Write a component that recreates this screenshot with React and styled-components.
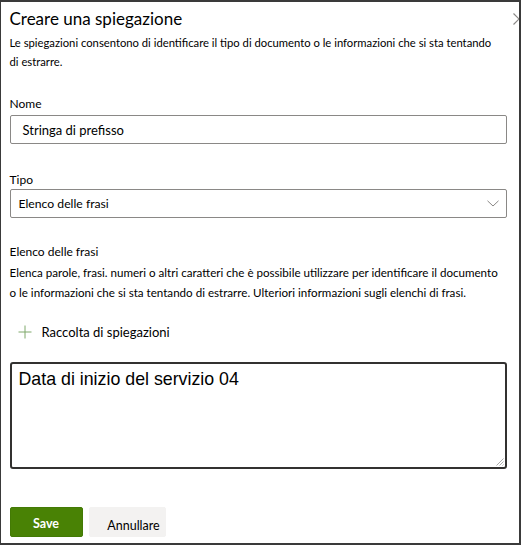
import React from "react";
import styled, { createGlobalStyle } from "styled-components";

const Global = createGlobalStyle`
  html, body { margin: 0; padding: 0; background: #fff; }
  body { font-family: Lato, "Liberation Sans", Arial, sans-serif; color: #000; }
  * { box-sizing: border-box; }
`;

const Panel = styled.div`
  position: relative;
  width: 521px;
  height: 545px;
  border: 2px solid #3a3a3a;
  border-left-width: 1.5px;
  overflow: hidden;
  padding: 0 12px 0 8.5px;
  display: flex;
  flex-direction: column;
`;

const Header = styled.div`
  position: relative;
  padding-top: 5px;
`;

const Title = styled.h1`
  margin: 0;
  font-size: 17px;
  font-weight: 400;
  line-height: 24px;
  color: #000;
`;

const Close = styled.button`
  position: absolute;
  top: 11px;
  right: -18px;
  width: 12px;
  height: 12px;
  padding: 0;
  border: 0;
  background: none;
  display: flex;
  svg { display: block; }
`;

const Text = styled.p`
  margin: ${p => p.$mt}px 0 0;
  max-width: ${p => p.$maxw}px;
  font-size: ${p => p.$size}px;
  line-height: ${p => p.$lh}px;
  color: #000;
`;

const Label = styled.label`
  display: block;
  margin-top: ${p => p.$mt}px;
  font-size: 12px;
  line-height: 18px;
  color: #000;
`;

const Field = styled.div`
  margin-top: ${p => p.$mt}px;
  height: 29px;
  border: 1px solid #8a8886;
  border-radius: 2px;
  display: flex;
  align-items: center;
  justify-content: space-between;
  padding-left: ${p => p.$pl}px;
  padding-right: 7px;
  font-size: ${p => p.$size}px;
  color: #000;
  svg { display: block; }
`;

const AddRow = styled.div`
  margin-top: 19px;
  height: 20px;
  display: flex;
  align-items: center;
  gap: 10px;
  padding-left: 8px;
  font-size: 13px;
  color: #000;
  svg { display: block; }
`;

const TextArea = styled.div`
  position: relative;
  margin-top: 20px;
  height: 107px;
  border: 2px solid #323130;
  border-radius: 3px;
  padding: 4px 7px;
  font-family: "Liberation Sans", Arial, sans-serif;
  font-size: 17.8px;
  line-height: 22px;
  color: #000;
`;

const Grip = styled.svg`
  position: absolute;
  right: 1px;
  bottom: 1px;
  display: block;
`;

const Footer = styled.div`
  margin-top: 38px;
  display: flex;
  gap: 6px;
`;

const Button = styled.button`
  height: 30px;
  width: ${p => p.$w}px;
  border-radius: 2px;
  border: 1px solid ${p => (p.$primary ? "#437a05" : "#f3f2f1")};
  background: ${p => (p.$primary ? "#498205" : "#f3f2f1")};
  color: ${p => (p.$primary ? "#fff" : "#000")};
  font-family: inherit;
  font-size: 12.5px;
  font-weight: ${p => (p.$primary ? 700 : 400)};
  padding: ${p => (p.$primary ? "2px 0 0 0" : "6px 0 0 13px")};
  cursor: pointer;
`;

export default function App() {
  return (
    <>
      <Global />
      <Panel>
        <Header>
          <Title>Creare una spiegazione</Title>
          <Close aria-label="Chiudi">
            <svg width="12" height="12" viewBox="0 0 12 12">
              <path d="M0.5 0.5L11.5 11.5M11.5 0.5L0.5 11.5" stroke="#8a8886" strokeWidth="1.2" />
            </svg>
          </Close>
        </Header>
        <Text $mt={2} $size={11.25} $lh={19} $maxw={486}>
          Le spiegazioni consentono di identificare il tipo di documento o le informazioni che si sta tentando di estrarre.
        </Text>
        <Label $mt={24}>Nome</Label>
        <Field $mt={2} $pl={12} $size={13}>Stringa di prefisso</Field>
        <Label $mt={27}>Tipo</Label>
        <Field $mt={0} $pl={8} $size={12.2}>
          <span>Elenco delle frasi</span>
          <svg width="12" height="7" viewBox="0 0 12 7">
            <path d="M0.5 0.8L6 6L11.5 0.8" fill="none" stroke="#8a8886" strokeWidth="1" />
          </svg>
        </Field>
        <Label $mt={25}>Elenco delle frasi</Label>
        <Text $mt={2} $size={11.6} $lh={20} $maxw={500}>
          Elenca parole, frasi. numeri o altri caratteri che è possibile utilizzare per identificare il documento o le informazioni che si sta tentando di estrarre. Ulteriori informazioni sugli elenchi di frasi.
        </Text>
        <AddRow>
          <svg width="14" height="14" viewBox="0 0 14 14">
            <path d="M7 0.5V13.5M0.5 7H13.5" stroke="#7fa86b" strokeWidth="1" />
          </svg>
          <span>Raccolta di spiegazioni</span>
        </AddRow>
        <TextArea>
          Data di inizio del servizio 04
          <Grip width="9" height="9" viewBox="0 0 9 9">
            <path d="M8.5 1.5L1.5 8.5M8.5 4.5L4.5 8.5M8.5 7.5L7.5 8.5" stroke="#a0a0a0" strokeWidth="0.9" />
          </Grip>
        </TextArea>
        <Footer>
          <Button $primary $w={73}>Save</Button>
          <Button $w={77}>Annullare</Button>
        </Footer>
      </Panel>
    </>
  );
}
